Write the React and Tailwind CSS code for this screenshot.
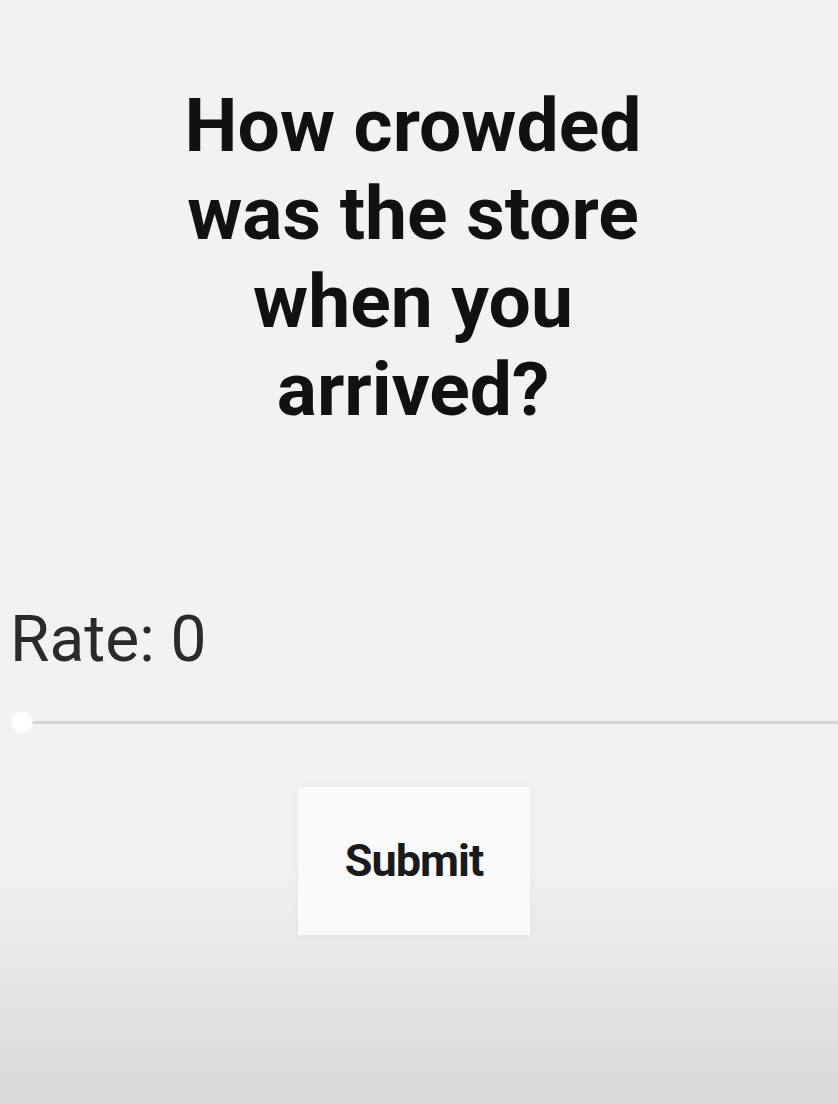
import { useState } from 'react'

export default function App() {
  const [rate, setRate] = useState(0)

  return (
    <div
      className="w-[838px] h-[1104px] overflow-hidden flex flex-col bg-[linear-gradient(to_bottom,#f2f2f2_0%,#f2f2f2_78%,#d8d8d8_100%)]"
      style={{ fontFamily: 'Roboto, "Liberation Sans", sans-serif' }}
    >
      {/* Question */}
      <div className="flex justify-center pt-[81px] pr-[12px]">
        <h1 className="w-[500px] text-center text-[75px] leading-[88px] font-bold text-[#111]">
          How crowded was the store when you arrived?
        </h1>
      </div>

      {/* Rating */}
      <div className="mt-[169px] pl-[10px] text-[64px] leading-[76px] text-[#2a2a2a]">
        Rate: {rate}
      </div>

      {/* Slider */}
      <div className="relative mt-[34px] h-[20px] flex items-center">
        <div className="ml-[30px] flex-1 h-[3px] bg-[#d4d4d4]" />
        <div className="absolute left-[12px] top-0 w-[20px] h-[20px] rounded-full bg-white shadow-[0_0_6px_rgba(255,255,255,0.9)]" />
      </div>

      {/* Submit */}
      <div className="flex justify-center mt-[55px]">
        <button
          onClick={() => setRate(rate)}
          className="w-[232px] h-[148px] mr-[10px] bg-[#fafafa] shadow-[0_0_10px_rgba(0,0,0,0.04)] text-[45px] font-bold text-[#1a1a1a] tracking-[-1px]"
        >
          Submit
        </button>
      </div>
    </div>
  )
}
